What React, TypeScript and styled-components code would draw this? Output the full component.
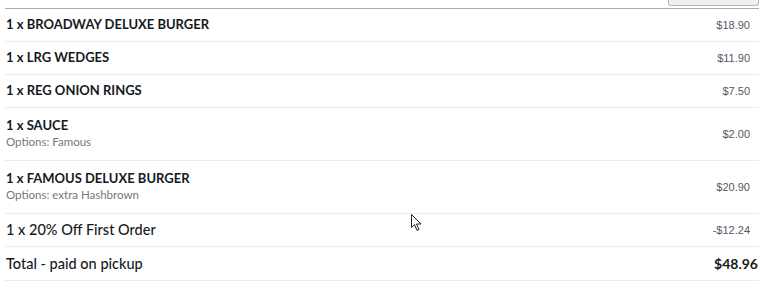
import React from 'react';
import styled, { createGlobalStyle } from 'styled-components';

const GlobalStyle = createGlobalStyle`
    body {
        margin: 0;
        background: #fff;
        font-family: Lato, "Open Sans", sans-serif;
    }
`;

interface Item {
    title: string;
    options?: string;
    price: string;
}

const items: Item[] = [
    { title: '1 x BROADWAY DELUXE BURGER', price: '$18.90' },
    { title: '1 x LRG WEDGES', price: '$11.90' },
    { title: '1 x REG ONION RINGS', price: '$7.50' },
    { title: '1 x SAUCE', options: 'Options: Famous', price: '$2.00' },
    { title: '1 x FAMOUS DELUXE BURGER', options: 'Options: extra Hashbrown', price: '$20.90' },
];

const Page = styled.div`
    position: relative;
    width: 754px;
    padding-left: 5px;
`;

const Toolbar = styled.div`
    display: flex;
    justify-content: flex-end;
    height: 8px;
`;

const CutButton = styled.div`
    width: 89px;
    height: 5px;
    background: #efefef;
    border: 1px solid #b9b9b9;
    border-top: none;
    border-radius: 0 0 3px 3px;
`;

const Table = styled.div`
    border-top: 1px solid #aaa;
`;

interface RowProps {
    height?: number;
}

const Row = styled.div<RowProps>`
    display: flex;
    align-items: center;
    justify-content: space-between;
    height: ${({ height }) => height ?? 32}px;
    border-bottom: 1px solid #ebebeb;
    padding: 0 1px 0 1px;
`;

const Info = styled.div`
    display: flex;
    flex-direction: column;
    gap: 2px;
    margin-top: -2px;
`;

interface TitleProps {
    caps?: boolean;
}

const Title = styled.span<TitleProps>`
    font-size: ${({ caps }) => (caps ? '13px' : '14.5px')};
    line-height: 16px;
    font-weight: ${({ caps }) => (caps ? 700 : 500)};
    color: #151a22;
`;

const Options = styled.span`
    font-size: 11.5px;
    line-height: 14px;
    color: #777;
`;

const Price = styled.span`
    font-family: "Liberation Sans", sans-serif;
    font-size: 11px;
    color: #575763;
    margin-right: 8px;
`;

const TotalPrice = styled.span`
    font-size: 14px;
    font-weight: 700;
    color: #1a1a1a;
`;

const Cursor = styled.svg`
    position: absolute;
    left: 411px;
    top: 214px;
`;

export default function App() {
    return (
        <Page>
            <GlobalStyle />
            <Toolbar>
                <CutButton />
            </Toolbar>
            <Table>
                {items.map((item) => (
                    <Row key={item.title} height={item.options ? 52 : 32}>
                        <Info>
                            <Title caps>{item.title}</Title>
                            {item.options && <Options>{item.options}</Options>}
                        </Info>
                        <Price>{item.price}</Price>
                    </Row>
                ))}
                <Row>
                    <Title>1 x 20% Off First Order</Title>
                    <Price>-$12.24</Price>
                </Row>
                <Row height={33}>
                    <Title>Total - paid on pickup</Title>
                    <TotalPrice>$48.96</TotalPrice>
                </Row>
            </Table>
            <Cursor width="12" height="18" viewBox="0 0 12 18">
                <path d="M0.5 0.5 L0.5 13.5 L3.5 10.5 L6 16.5 L8 15.5 L5.5 10 L10 10 Z" fill="#fff" stroke="#222" strokeWidth="1" />
            </Cursor>
        </Page>
    );
}
